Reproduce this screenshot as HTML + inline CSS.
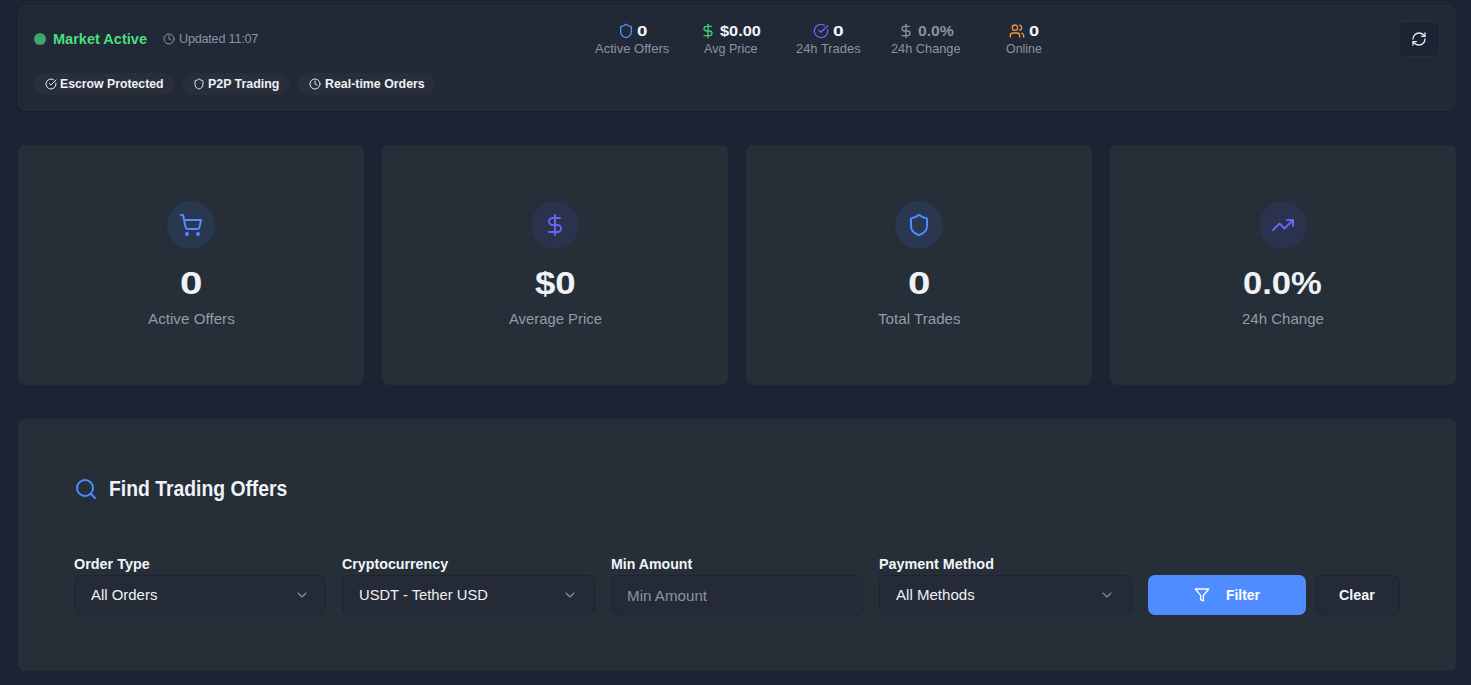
<!DOCTYPE html>
<html lang="en">
<head>
<meta charset="utf-8">
<title>P2P Market</title>
<style>
*{box-sizing:border-box;margin:0;padding:0}
html,body{width:1471px;height:685px;overflow:hidden}
body{background:#1b2433;font-family:"Liberation Sans",sans-serif;color:#f1f5f9;position:relative}
svg{display:block;fill:none;stroke:currentColor;stroke-width:2;stroke-linecap:round;stroke-linejoin:round}
.abs{position:absolute}
.t{position:absolute;white-space:nowrap;line-height:1;transform-origin:0 50%}

/* header card */
.hdr{position:absolute;left:18px;top:5px;width:1438px;height:106px;background:#212836;border:1px solid #242d3a;border-radius:7px;box-shadow:0 1px 3px rgba(0,0,0,.18)}
.dot{position:absolute;left:34px;top:33px;width:12px;height:12px;border-radius:50%;background:#3fa66c}
.chip{position:absolute;top:73px;height:22px;border-radius:11px;background:#282e3a}

/* stat cards */
.card{position:absolute;top:145px;width:346px;height:240px;background:#262e38;border-radius:7px}
.circ{position:absolute;left:149px;top:56px;width:48px;height:48px;border-radius:50%}
.circ svg{position:absolute;left:12px;top:12px;width:24px;height:24px}

/* filter card */
.flt{position:absolute;left:18px;top:419px;width:1438px;height:252px;background:#262e38;border-radius:7px}
.sel{position:absolute;top:575px;width:252.400px;height:40px;border:1px solid #1d2431;background:#242b37;border-radius:7px}
.sel svg{position:absolute;left:218.600px;top:11px;width:16px;height:16px;color:#8a919e;stroke-width:1.6}
</style>
</head>
<body>

<!-- HEADER -->
<div class="hdr"></div>
<div class="dot"></div>
<div class="t" id="ma" style="left:53.42px;top:31.5px;font-size:14.4px;font-weight:bold;color:#4ade80;transform:scaleX(1.0101)">Market Active</div>
<svg class="abs" style="left:163px;top:33px;width:12px;height:12px;color:#8b93a1" viewBox="0 0 24 24"><circle cx="12" cy="12" r="10"/><path d="M12 6v6l4 2"/></svg>
<div class="t" id="upd" style="left:179.44px;top:32.5px;font-size:12.6px;letter-spacing:-0.2px;color:#8b93a1;transform:scaleX(1.0003)">Updated 11:07</div>

<div class="chip" style="left:34px;width:140px"></div>
<svg class="abs" style="left:45px;top:78px;width:12px;height:12px;color:#e5e9f0" viewBox="0 0 24 24"><path d="M21.8 10A10 10 0 1 1 17 3.34"/><path d="m9 11 3 3L22 4"/></svg>
<div class="t" id="c1" style="left:60.14px;top:78px;font-size:12.1px;font-weight:bold;color:#eef1f6;transform:scaleX(1.0136)">Escrow Protected</div>

<div class="chip" style="left:182px;width:108px"></div>
<svg class="abs" style="left:193px;top:78px;width:12px;height:12px;color:#e5e9f0" viewBox="0 0 24 24"><path d="M20 13c0 5-3.5 7.500-7.660 8.950a1 1 0 0 1-.670-.010C7.500 20.500 4 18 4 13V6a1 1 0 0 1 1-1c2 0 4.500-1.200 6.240-2.720a1.170 1.170 0 0 1 1.520 0C14.510 3.810 17 5 19 5a1 1 0 0 1 1 1z"/></svg>
<div class="t" id="c2" style="left:207.61px;top:78px;font-size:12.1px;font-weight:bold;color:#eef1f6;transform:scaleX(1.0233)">P2P Trading</div>

<div class="chip" style="left:298px;width:137px"></div>
<svg class="abs" style="left:309px;top:78px;width:12px;height:12px;color:#e5e9f0" viewBox="0 0 24 24"><circle cx="12" cy="12" r="10"/><path d="M12 6v6l4 2"/></svg>
<div class="t" id="c3" style="left:325.29px;top:78px;font-size:12.1px;font-weight:bold;color:#eef1f6;transform:scaleX(1.0236)">Real-time Orders</div>

<!-- center mini stats -->
<svg class="abs" style="left:618px;top:22.5px;width:16px;height:16px;color:#4f8cff" viewBox="0 0 24 24"><path d="M20 13c0 5-3.500 7.500-7.660 8.950a1 1 0 0 1-.670-.010C7.500 20.500 4 18 4 13V6a1 1 0 0 1 1-1c2 0 4.500-1.200 6.240-2.720a1.170 1.170 0 0 1 1.520 0C14.510 3.810 17 5 19 5a1 1 0 0 1 1 1z"/></svg>
<div class="t" id="m1" style="left:637.04px;top:23px;font-size:15.500px;font-weight:bold;color:#f4f6fa;transform:scaleX(1.2029)">0</div>
<div class="t" id="l1" style="left:595.23px;top:43.400px;font-size:12.700px;color:#8b93a1;transform:scaleX(1.0253)">Active Offers</div>

<svg class="abs" style="left:700px;top:23px;width:16px;height:16px;color:#3fcf7a" viewBox="0 0 24 24"><path d="M12 2v20"/><path d="M17 5H9.500a3.500 3.500 0 0 0 0 7h5a3.500 3.500 0 0 1 0 7H6"/></svg>
<div class="t" id="m2" style="left:720.34px;top:23px;font-size:15.500px;font-weight:bold;color:#f4f6fa;transform:scaleX(1.0534)">$0.00</div>
<div class="t" id="l2" style="left:703.61px;top:43.400px;font-size:12.700px;color:#8b93a1;transform:scaleX(0.9904)">Avg Price</div>

<svg class="abs" style="left:813px;top:22.700px;width:16px;height:16px;color:#6366f1" viewBox="0 0 24 24"><path d="M21.800 10A10 10 0 1 1 17 3.340"/><path d="m9 11 3 3L22 4"/></svg>
<div class="t" id="m3" style="left:832.65px;top:23px;font-size:15.500px;font-weight:bold;color:#f4f6fa;transform:scaleX(1.2300)">0</div>
<div class="t" id="l3" style="left:795.65px;top:43.400px;font-size:12.700px;color:#8b93a1;transform:scaleX(1.0174)">24h Trades</div>

<svg class="abs" style="left:898px;top:23px;width:16px;height:16px;color:#8b93a1" viewBox="0 0 24 24"><path d="M12 2v20"/><path d="M17 5H9.500a3.500 3.500 0 0 0 0 7h5a3.500 3.500 0 0 1 0 7H6"/></svg>
<div class="t" id="m4" style="left:918.00px;top:23px;font-size:15.500px;font-weight:bold;color:#8b93a1;transform:scaleX(1.0149)">0.0%</div>
<div class="t" id="l4" style="left:890.84px;top:43.400px;font-size:12.700px;color:#8b93a1;transform:scaleX(1.0062)">24h Change</div>

<svg class="abs" style="left:1008.500px;top:22.700px;width:16px;height:16px;color:#f59342" viewBox="0 0 24 24"><path d="M16 21v-2a4 4 0 0 0-4-4H6a4 4 0 0 0-4 4v2"/><circle cx="9" cy="7" r="4"/><path d="M22 21v-2a4 4 0 0 0-3-3.870"/><path d="M16 3.130a4 4 0 0 1 0 7.750"/></svg>
<div class="t" id="m5" style="left:1029.15px;top:23px;font-size:15.500px;font-weight:bold;color:#f4f6fa;transform:scaleX(1.1678)">0</div>
<div class="t" id="l5" style="left:1005.62px;top:43.400px;font-size:12.700px;color:#8b93a1;transform:scaleX(0.9767)">Online</div>

<!-- refresh button -->
<div class="abs" style="left:1398px;top:21px;width:42px;height:35.500px;border-radius:7px;background:#1b2433;border:1px solid #28303d"></div>
<svg class="abs" style="left:1411px;top:31px;width:16px;height:16px;color:#e5e9f0" viewBox="0 0 24 24"><path d="M3 12a9 9 0 0 1 9-9 9.750 9.750 0 0 1 6.740 2.740L21 8"/><path d="M21 3v5h-5"/><path d="M21 12a9 9 0 0 1-9 9 9.750 9.750 0 0 1-6.740-2.740L3 16"/><path d="M8 16H3v5"/></svg>

<!-- STAT CARDS -->
<div class="card" style="left:18px">
  <div class="circ" style="background:#293750;color:#4f8cff"><svg viewBox="0 0 24 24"><circle cx="8" cy="21" r="1"/><circle cx="19" cy="21" r="1"/><path d="M2.050 2.050h2l2.660 12.420a2 2 0 0 0 2 1.580h9.780a2 2 0 0 0 1.950-1.570l1.650-7.430H5.120"/></svg></div>
</div>
<div class="card" style="left:382px">
  <div class="circ" style="background:#2b324d;color:#6366f1"><svg viewBox="0 0 24 24"><path d="M12 2v20"/><path d="M17 5H9.500a3.500 3.500 0 0 0 0 7h5a3.500 3.500 0 0 1 0 7H6"/></svg></div>
</div>
<div class="card" style="left:746px">
  <div class="circ" style="background:#293750;color:#4f8cff"><svg viewBox="0 0 24 24"><path d="M20 13c0 5-3.500 7.500-7.660 8.950a1 1 0 0 1-.670-.010C7.500 20.500 4 18 4 13V6a1 1 0 0 1 1-1c2 0 4.500-1.200 6.240-2.720a1.170 1.170 0 0 1 1.520 0C14.510 3.810 17 5 19 5a1 1 0 0 1 1 1z"/></svg></div>
</div>
<div class="card" style="left:1110px">
  <div class="circ" style="background:#2b324d;color:#6366f1"><svg viewBox="0 0 24 24"><path d="M22 7 13.500 15.500 8.500 10.500 2 17"/><path d="M16 7h6v6"/></svg></div>
</div>

<!-- stat card texts -->
<div class="t" id="n1" style="left:180.39px;top:268px;font-size:31.500px;font-weight:bold;color:#eff2f6;transform:scaleX(1.2804)">0</div>
<div class="t" id="cl1" style="left:148.17px;top:311px;font-size:15px;color:#949ba8;transform:scaleX(1.0139)">Active Offers</div>
<div class="t" id="n2" style="left:534.84px;top:268px;font-size:31.500px;font-weight:bold;color:#eff2f6;transform:scaleX(1.1627)">$0</div>
<div class="t" id="cl2" style="left:508.94px;top:311px;font-size:15px;color:#949ba8;transform:scaleX(0.9887)">Average Price</div>
<div class="t" id="n3" style="left:908.39px;top:268px;font-size:31.500px;font-weight:bold;color:#eff2f6;transform:scaleX(1.2804)">0</div>
<div class="t" id="cl3" style="left:877.89px;top:311px;font-size:15px;color:#949ba8;transform:scaleX(1.0110)">Total Trades</div>
<div class="t" id="n4" style="left:1243.29px;top:268px;font-size:31.500px;font-weight:bold;color:#eff2f6;transform:scaleX(1.0972)">0.0%</div>
<div class="t" id="cl4" style="left:1242.31px;top:311px;font-size:15px;color:#949ba8;transform:scaleX(1.0018)">24h Change</div>

<!-- FILTER CARD -->
<div class="flt"></div>
<svg class="abs" style="left:74px;top:477px;width:24px;height:24px;color:#4f8cff" viewBox="0 0 24 24"><circle cx="11" cy="11" r="8"/><path d="m21 21-4.300-4.300"/></svg>
<div class="t" id="ft" style="left:108.64px;top:477.700px;font-size:22px;font-weight:bold;color:#eff2f6;transform:scaleX(0.8790)">Find Trading Offers</div>

<div class="t" id="f1" style="left:74.39px;top:555.500px;font-size:15px;font-weight:bold;color:#f1f5f9;transform:scaleX(0.9588)">Order Type</div>
<div class="t" id="f2" style="left:341.56px;top:555.500px;font-size:15px;font-weight:bold;color:#f1f5f9;transform:scaleX(0.9496)">Cryptocurrency</div>
<div class="t" id="f3" style="left:610.50px;top:555.500px;font-size:15px;font-weight:bold;color:#f1f5f9;transform:scaleX(0.9427)">Min Amount</div>
<div class="t" id="f4" style="left:879.42px;top:555.500px;font-size:15px;font-weight:bold;color:#f1f5f9;transform:scaleX(0.9575)">Payment Method</div>

<div class="sel" style="left:74px"><svg viewBox="0 0 24 24"><path d="m6 9 6 6 6-6"/></svg></div>
<div class="sel" style="left:342.400px"><svg viewBox="0 0 24 24"><path d="m6 9 6 6 6-6"/></svg></div>
<div class="sel" style="left:610.800px"></div>
<div class="sel" style="left:879.200px"><svg viewBox="0 0 24 24"><path d="m6 9 6 6 6-6"/></svg></div>

<div class="t" id="s1" style="left:90.77px;top:587px;font-size:15px;color:#eef1f6;transform:scaleX(0.9950)">All Orders</div>
<div class="t" id="s2" style="left:358.92px;top:587px;font-size:15px;color:#eef1f6;transform:scaleX(0.9827)">USDT - Tether USD</div>
<div class="t" id="s3" style="left:626.52px;top:588px;font-size:15px;color:#8b93a1;transform:scaleX(1.0106)">Min Amount</div>
<div class="t" id="s4" style="left:895.54px;top:587px;font-size:15px;color:#eef1f6;transform:scaleX(1.0038)">All Methods</div>

<div class="abs" style="left:1147.600px;top:575px;width:158.600px;height:40px;border-radius:7px;background:#4f8cff"></div>
<svg class="abs" style="left:1194px;top:587px;width:16px;height:16px;color:#fff;stroke-width:2" viewBox="0 0 24 24"><path d="M22 3H2l8 9.460V19l4 2v-8.540L22 3z"/></svg>
<div class="t" id="bf" style="left:1226.07px;top:587px;font-size:15px;font-weight:bold;color:#fff;transform:scaleX(0.9275)">Filter</div>

<div class="abs" style="left:1314.600px;top:575px;width:85.400px;height:40px;border-radius:7px;background:#242b37;border:1px solid #1d2431"></div>
<div class="t" id="bc" style="left:1339.26px;top:587px;font-size:15px;font-weight:bold;color:#f4f6fa;transform:scaleX(0.9514)">Clear</div>

</body>
</html>
